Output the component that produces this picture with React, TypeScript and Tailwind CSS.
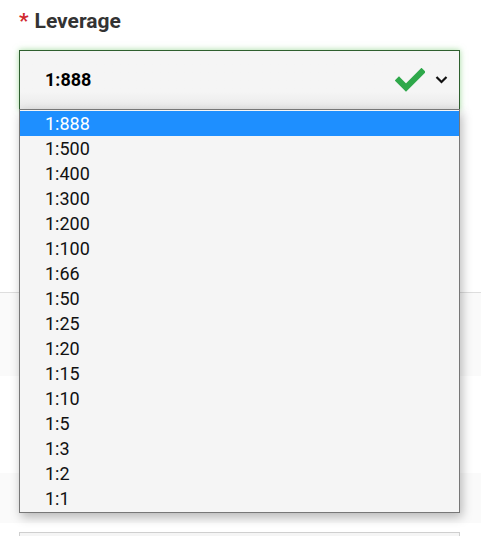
import React from "react";

const options = ["1:888", "1:500", "1:400", "1:300", "1:200", "1:100", "1:66", "1:50", "1:25", "1:20", "1:15", "1:10", "1:5", "1:3", "1:2", "1:1"];

export default function App() {
  const selected = "1:888";

  return (
    <main className="relative w-[481px] h-[536px] overflow-hidden bg-white font-['Roboto',sans-serif]">
      <div className="pl-[19px] pt-[6px]">
        <label className="flex items-center gap-[6px] text-[21px] font-bold text-[#333]">
          <span className="text-[#d0282e]">*</span>
          Leverage
        </label>
      </div>

      <div className="relative mt-[12px] ml-[19px] w-[441px]">
        {/* select box */}
        <div className="flex h-[60px] items-center justify-between border border-[#2f5f2f] bg-gradient-to-b from-[#f5f5f5] from-70% to-[#e9e9e9] pl-[25px] pr-[11px] shadow-[0_0_6px_rgba(90,190,80,0.55)]">
          <span className="text-[18px] font-bold text-black">{selected}</span>
          <div className="flex items-center gap-[10px]">
            <svg width="30" height="24" viewBox="0 0 30 24">
              <path d="M4 12.5 L11 19.5 L26.5 4" fill="none" stroke="#2ea84a" strokeWidth="6" strokeLinecap="square" />
            </svg>
            <svg width="13" height="9" viewBox="0 0 13 9">
              <path d="M1.5 2 L6.5 7 L11.5 2" fill="none" stroke="#111" strokeWidth="2.2" />
            </svg>
          </div>
        </div>

        {/* dropdown */}
        <ul className="absolute left-0 top-[59px] z-10 w-[441px] border border-[#777] bg-[#f5f5f5] py-px shadow-[2px_4px_10px_rgba(0,0,0,0.28)]">
          {options.map((o) => (
            <li
              key={o}
              className={
                o === selected
                  ? "h-[25px] pl-[25px] text-[18px] leading-[25px] bg-[#1e8fff] text-white"
                  : "h-[25px] pl-[25px] text-[18px] leading-[25px] text-[#111]"
              }
            >
              {o}
            </li>
          ))}
        </ul>
      </div>

      {/* content behind the open list */}
      <div className="mt-[182px] h-[84px] border-t border-[#dedede] bg-[#fafafa]" />
      <div className="mt-[97px] h-[50px] bg-[#fafafa]" />
      <div className="ml-[19px] mt-[9px] h-[30px] w-[441px] border border-[#cfcfcf] bg-[#f5f5f5]" />
    </main>
  );
}
